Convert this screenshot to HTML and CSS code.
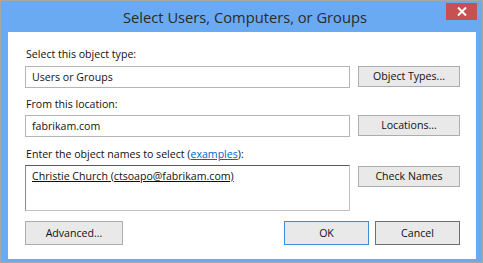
FILE: index.html
```html
<!DOCTYPE html>
<html>
<head>
<meta charset="utf-8">
<link rel="stylesheet" href="styles.css">
</head>
<body>
<div class="window">
  <div class="titlebar">
    <div class="spacer"></div>
    <div class="title">Select Users, Computers, or Groups</div>
    <div class="close-wrap">
      <div class="close">
        <svg width="10" height="9" viewBox="0 0 10 9"><path d="M1 0.5 L9 8.5 M9 0.5 L1 8.5" stroke="#fff" stroke-width="2"/></svg>
      </div>
    </div>
  </div>
  <div class="content">
    <div class="label l1">Select this object type:</div>
    <div class="row">
      <div class="field">Users or Groups</div>
      <div class="btn">Object Types...</div>
    </div>
    <div class="label l2">From this location:</div>
    <div class="row">
      <div class="field">fabrikam.com</div>
      <div class="btn">Locations...</div>
    </div>
    <div class="label l3">Enter the object names to select (<span class="link">examples</span>):</div>
    <div class="row top">
      <div class="field area"><span class="resolved">Christie Church (ctsoapo@fabrikam.com)</span></div>
      <div class="btn">Check Names</div>
    </div>
    <div class="footer">
      <div class="btn wide adv">Advanced...</div>
      <div class="actions">
        <div class="btn act ok">OK</div>
        <div class="btn act cancel">Cancel</div>
      </div>
    </div>
  </div>
</div>
</body>
</html>
```
FILE: styles.css
```css
html, body { margin: 0; padding: 0; background: #fff; }
body { font-family: "Open Sans", "Noto Sans", sans-serif; }
.window {
  box-sizing: border-box;
  width: 483px;
  height: 263px;
  border: 1px solid #a7a7a7;
  background: #6aaaf2;
  display: flex;
  flex-direction: column;
}
.titlebar {
  height: 31px;
  display: grid;
  grid-template-columns: 1fr auto 1fr;
  align-items: start;
}
.title {
  font-size: 14.7px;
  color: #2a2a2a;
  line-height: 20px;
  padding-top: 6px;
  padding-left: 7px;
  white-space: nowrap;
}
.close-wrap { display: flex; justify-content: flex-end; padding-top: 2px; padding-right: 5px; }
.close {
  width: 31px;
  height: 17px;
  background: #c75050;
  display: flex;
  align-items: center;
  justify-content: center;
}
.close svg { display: block; }
.content {
  background: #fff;
  margin: 0 6px 3px 7px;
  flex: 1;
  padding: 14px 16px 0 17px;
  font-size: 10.6px;
  color: #111;
}
.label { line-height: 16px; height: 16px; padding-left: 1px; white-space: nowrap; }
.l1 { margin-bottom: 4px; }
.l2 { margin-top: 8px; margin-bottom: 3px; }
.l3 { margin-top: 9px; margin-bottom: 3px; }
.link { color: #0066cc; text-decoration: underline; }
.row { display: flex; gap: 8px; align-items: flex-start; }
.field {
  box-sizing: border-box;
  width: 325px;
  height: 22px;
  border: 1px solid #b4b4b4;
  padding: 0 6px;
  line-height: 20px;
  white-space: nowrap;
}
.field.area {
  height: 46px;
  border-top-color: #5a5a5a;
  border-left-color: #8a8a8a;
  border-right-color: #c2c2c2;
  border-bottom-color: #c2c2c2;
  line-height: 18px;
  padding-top: 1px;
}
.resolved { text-decoration: underline; }
.btn {
  box-sizing: border-box;
  width: 102px;
  height: 21px;
  border: 1px solid #adadad;
  background: #e9e9e9;
  text-align: center;
  line-height: 19px;
  white-space: nowrap;
}
.row.top .btn { margin-top: 1px; }
.footer {
  margin-top: 10px;
  display: flex;
  justify-content: space-between;
}
.btn.wide { width: 98px; height: 24px; line-height: 22px; }
.actions { display: flex; gap: 6px; }
.btn.act { width: 85px; height: 24px; line-height: 22px; }
.btn.ok { border-color: #3c8fd6; }
.btn.cancel { border-color: #707070; }
```
